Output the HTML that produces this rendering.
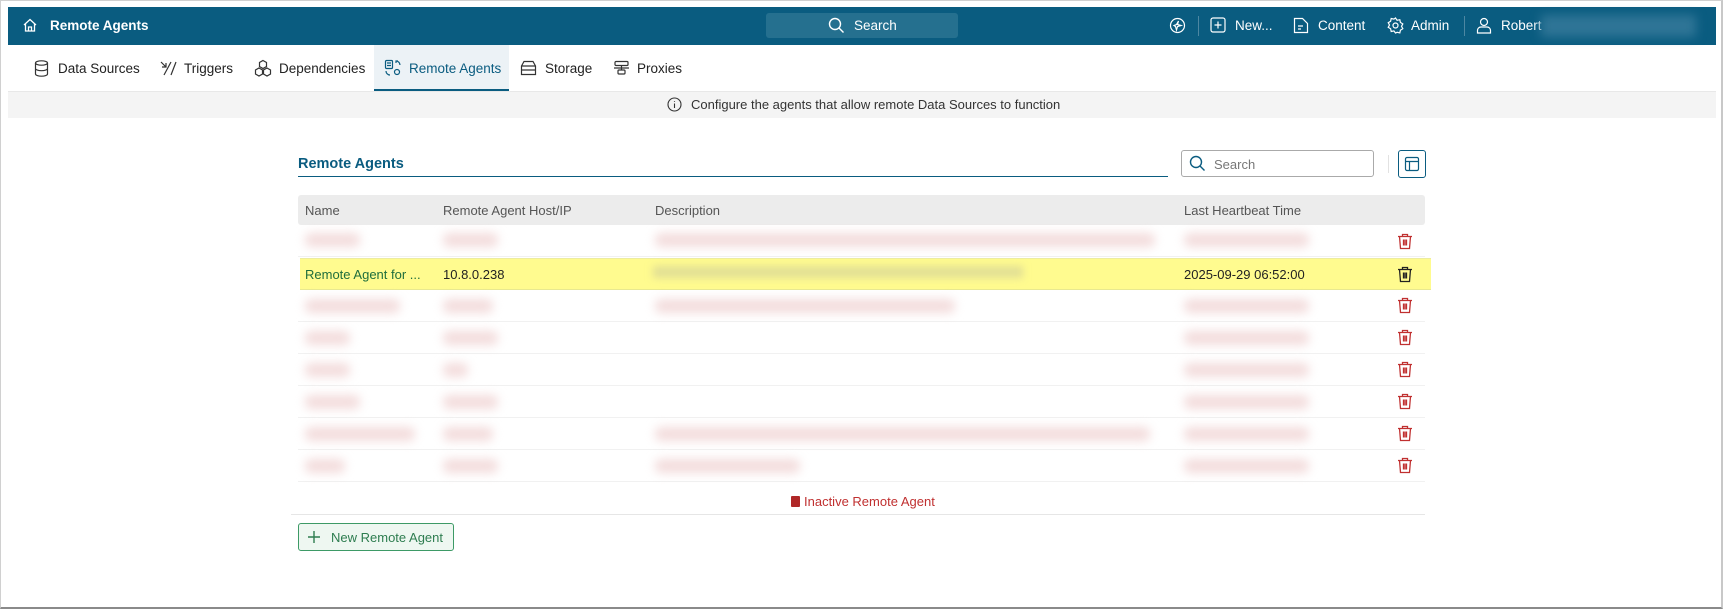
<!DOCTYPE html>
<html><head><meta charset="utf-8"><style>
*{box-sizing:border-box;margin:0;padding:0}
body{width:1723px;height:609px;background:#fff;font-family:"Liberation Sans",sans-serif;position:relative;overflow:hidden;color:#333}
.frame{position:absolute;left:0;top:0;width:1723px;height:609px;border:1px solid #d0d0d0;border-bottom:2px solid #8a8a8a;border-right:2px solid #c8c8c8}
.hdr{position:absolute;left:8px;top:7px;width:1708px;height:38px;background:#0a5c80;color:#fff;font-size:13.5px}
.hdr .t{position:absolute;top:11px}
.abs{position:absolute}
.tab{position:absolute;top:61px;font-size:13.5px;color:#222}
.blur{position:absolute;height:14px;margin-top:-3px;background:#f3dcdc;filter:blur(5px);border-radius:6px}
.row{position:absolute;left:298px;width:1127px;height:32px;border-bottom:1px solid #f1f1f1}
.trash{position:absolute;left:1397px}
</style></head><body>
<div class="frame"></div>
<div class="hdr">
 <svg class="abs" style="left:14px;top:10px" width="16" height="16" viewBox="0 0 16 16" fill="none" stroke="#fff" stroke-width="1.3"><path d="M2 8L8 2.5 14 8M3.5 6.8V14h9V6.8M6.5 14V10h3v4"/></svg>
 <span class="t" style="left:42px;font-weight:bold">Remote Agents</span>
 <div class="abs" style="left:758px;top:6px;width:192px;height:25px;background:#25708f;border-radius:3px"></div>
 <svg class="abs" style="left:820px;top:10px" width="17" height="17" viewBox="0 0 17 17" fill="none" stroke="#fff" stroke-width="1.4"><circle cx="7" cy="7" r="5.5"/><path d="M11 11l4.5 4.5"/></svg>
 <span class="t" style="left:846px">Search</span>
 <svg class="abs" style="left:1161px;top:10px" width="17" height="17" viewBox="0 0 17 17" fill="none" stroke="#fff" stroke-width="1.2"><circle cx="8.5" cy="8.5" r="7"/><path d="M9.5 4l-1 3.5L12 8.5l-3.5 1-1 3.5-1-3.5L5 8.5l2.5-1z"/></svg>
 <div class="abs" style="left:1190px;top:9px;width:1px;height:20px;background:#4d87a2"></div>
 <svg class="abs" style="left:1202px;top:10px" width="16" height="16" viewBox="0 0 16 16" fill="none" stroke="#fff" stroke-width="1.2"><rect x="1" y="1" width="14" height="14" rx="2"/><path d="M8 4.5v7M4.5 8h7"/></svg>
 <span class="t" style="left:1227px">New...</span>
 <svg class="abs" style="left:1285px;top:10px" width="16" height="17" viewBox="0 0 16 17" fill="none" stroke="#fff" stroke-width="1.2"><path d="M1.5 1.5h8l5 5v9h-13zM5 9h5M5 12h3"/></svg>
 <span class="t" style="left:1310px">Content</span>
 <svg class="abs" style="left:1379px;top:10px" width="17" height="17" viewBox="0 0 17 17" fill="none" stroke="#fff" stroke-width="1.2"><circle cx="8.5" cy="8.5" r="2.5"/><path d="M8.5 1l1.6 2.3 2.7-.6.6 2.7 2.4 1.5-1.3 2.4 1.3 2.4-2.4 1.5-.6 2.7-2.7-.6L8.5 16 6.9 13.9l-2.7.6-.6-2.7L1.2 10.3 2.5 8 1.2 5.7 3.6 4.2l.6-2.7 2.7.6z"/></svg>
 <span class="t" style="left:1403px">Admin</span>
 <div class="abs" style="left:1456px;top:9px;width:1px;height:20px;background:#4d87a2"></div>
 <svg class="abs" style="left:1468px;top:10px" width="16" height="17" viewBox="0 0 16 17" fill="none" stroke="#fff" stroke-width="1.2"><circle cx="8" cy="5" r="3.5"/><path d="M1.5 16v-2.5c0-2 1.5-3.5 3.5-3.5h6c2 0 3.5 1.5 3.5 3.5V16z"/></svg>
 <span class="t" style="left:1493px">Robert</span>
 <div class="abs" style="left:1533px;top:8px;width:155px;height:22px;background:#2f7596;filter:blur(5px)"></div>
</div>
<!-- tabs -->
<div class="abs" style="left:374px;top:45px;width:135px;height:46px;background:#ecf2f6;border-bottom:2px solid #0a5c80"></div>
<svg class="abs" style="left:34px;top:60px" width="15" height="17" viewBox="0 0 15 17" fill="none" stroke="#333" stroke-width="1.2"><ellipse cx="7.5" cy="3" rx="6" ry="2.2"/><path d="M1.5 3v11c0 1.2 2.7 2.2 6 2.2s6-1 6-2.2V3M1.5 8.5c0 1.2 2.7 2.2 6 2.2s6-1 6-2.2"/></svg>
<span class="tab" style="left:58px">Data Sources</span>
<svg class="abs" style="left:159px;top:60px" width="18" height="17" viewBox="0 0 18 17" fill="none" stroke="#333" stroke-width="1.2"><path d="M2 2l5 5M7 3v4H3M5 15L12 2M12 15L17 2"/></svg>
<span class="tab" style="left:184px">Triggers</span>
<svg class="abs" style="left:254px;top:59px" width="18" height="18" viewBox="0 0 18 18" fill="none" stroke="#333" stroke-width="1.2"><path d="M9 1.5l3.5 2v4L9 9.5l-3.5-2v-4zM5 9l3.5 2v4L5 17l-3.5-2v-4zM13 9l3.5 2v4L13 17l-3.5-2v-4z"/></svg>
<span class="tab" style="left:279px">Dependencies</span>
<svg class="abs" style="left:384px;top:59px" width="18" height="18" viewBox="0 0 18 18" fill="none" stroke="#0a5c80" stroke-width="1.2"><rect x="1.5" y="1.5" width="7" height="8" rx="1"/><path d="M3 4h4M3 6.5h4M12 2a4 4 0 0 1 4 4M14 2h-2v2M6 16a4 4 0 0 1-4-4"/><circle cx="13" cy="13" r="2.5"/></svg>
<span class="tab" style="left:409px;color:#0a5c80">Remote Agents</span>
<svg class="abs" style="left:520px;top:60px" width="17" height="16" viewBox="0 0 17 16" fill="none" stroke="#333" stroke-width="1.2"><path d="M1.5 6L4 1.5h9L15.5 6v8.5h-14zM1.5 6h14M1.5 10h14"/></svg>
<span class="tab" style="left:545px">Storage</span>
<svg class="abs" style="left:613px;top:60px" width="17" height="16" viewBox="0 0 17 16" fill="none" stroke="#333" stroke-width="1.2"><rect x="2" y="1.5" width="13" height="4" rx="1"/><rect x="5" y="10" width="7" height="4" rx="1"/><path d="M8.5 5.5V10M1 8h15"/></svg>
<span class="tab" style="left:637px">Proxies</span>
<!-- info bar -->
<div class="abs" style="left:8px;top:91px;width:1708px;height:27px;background:#f4f4f4;border-top:1px solid #e8e8e8"></div>
<svg class="abs" style="left:667px;top:97px" width="15" height="15" viewBox="0 0 15 15" fill="none" stroke="#333" stroke-width="1.1"><circle cx="7.5" cy="7.5" r="6.5"/><path d="M7.5 6.5v4.5M7.5 4v.8"/></svg>
<span class="abs" style="left:691px;top:97px;font-size:13px;color:#333">Configure the agents that allow remote Data Sources to function</span>
<!-- title -->
<span class="abs" style="left:298px;top:156px;font-size:14.5px;font-weight:bold;color:#0a5c80">Remote Agents</span>
<div class="abs" style="left:298px;top:176px;width:870px;height:1px;background:#0a5c80"></div>
<div class="abs" style="left:1181px;top:150px;width:193px;height:27px;border:1px solid #aaa;border-radius:3px"></div>
<svg class="abs" style="left:1189px;top:155px" width="17" height="17" viewBox="0 0 17 17" fill="none" stroke="#0a5c80" stroke-width="1.4"><circle cx="7" cy="7" r="5.5"/><path d="M11 11l4.5 4.5"/></svg>
<span class="abs" style="left:1214px;top:157px;font-size:13px;color:#777">Search</span>
<div class="abs" style="left:1388px;top:155px;width:1px;height:18px;background:#e2e2e2"></div>
<div class="abs" style="left:1398px;top:150px;width:28px;height:28px;border:1.3px solid #0a5c80;border-radius:3px"></div>
<svg class="abs" style="left:1404px;top:156px" width="16" height="16" viewBox="0 0 16 16" fill="none" stroke="#0a5c80" stroke-width="1.2"><rect x="1.5" y="1.5" width="13" height="13" rx="1.5"/><path d="M1.5 5.5h13M5.5 5.5v9"/></svg>
<!-- table header -->
<div class="abs" style="left:298px;top:195px;width:1127px;height:30px;background:#ececec;border-radius:3px"></div>
<span class="abs" style="left:305px;top:203px;font-size:13px;color:#555">Name</span>
<span class="abs" style="left:443px;top:203px;font-size:13px;color:#555">Remote Agent Host/IP</span>
<span class="abs" style="left:655px;top:203px;font-size:13px;color:#555">Description</span>
<span class="abs" style="left:1184px;top:203px;font-size:13px;color:#555">Last Heartbeat Time</span>

<!-- rows -->
<div class="row" style="top:225px"></div>
<div class="blur" style="left:305px;top:236px;width:55px"></div><div class="blur" style="left:443px;top:236px;width:55px"></div><div class="blur" style="left:655px;top:236px;width:500px"></div><div class="blur" style="left:1184px;top:236px;width:125px"></div>
<div class="abs" style="left:300px;top:258px;width:1131px;height:32px;background:#fffb8f;border-top:1px solid #ececa0;border-bottom:1px solid #e8e890"></div>
<span class="abs" style="left:305px;top:267px;font-size:13px;color:#1f6e3c">Remote Agent for ...</span>
<span class="abs" style="left:443px;top:267px;font-size:13px;color:#222">10.8.0.238</span>
<div class="abs" style="left:653px;top:266px;width:370px;height:12px;background:#e2df95;filter:blur(4px)"></div>
<span class="abs" style="left:1184px;top:267px;font-size:13px;color:#222">2025-09-29 06:52:00</span>

<div class="row" style="top:290px"></div>
<div class="blur" style="left:305px;top:302px;width:95px"></div><div class="blur" style="left:443px;top:302px;width:50px"></div><div class="blur" style="left:655px;top:302px;width:300px"></div><div class="blur" style="left:1184px;top:302px;width:125px"></div>
<div class="row" style="top:322px"></div>
<div class="blur" style="left:305px;top:334px;width:45px"></div><div class="blur" style="left:443px;top:334px;width:55px"></div><div class="blur" style="left:1184px;top:334px;width:125px"></div>
<div class="row" style="top:354px"></div>
<div class="blur" style="left:305px;top:366px;width:45px"></div><div class="blur" style="left:443px;top:366px;width:25px"></div><div class="blur" style="left:1184px;top:366px;width:125px"></div>
<div class="row" style="top:386px"></div>
<div class="blur" style="left:305px;top:398px;width:55px"></div><div class="blur" style="left:443px;top:398px;width:55px"></div><div class="blur" style="left:1184px;top:398px;width:125px"></div>
<div class="row" style="top:418px"></div>
<div class="blur" style="left:305px;top:430px;width:110px"></div><div class="blur" style="left:443px;top:430px;width:50px"></div><div class="blur" style="left:655px;top:430px;width:495px"></div><div class="blur" style="left:1184px;top:430px;width:125px"></div>
<div class="row" style="top:450px"></div>
<div class="blur" style="left:305px;top:462px;width:40px"></div><div class="blur" style="left:443px;top:462px;width:55px"></div><div class="blur" style="left:655px;top:462px;width:145px"></div><div class="blur" style="left:1184px;top:462px;width:125px"></div>

<!-- trash icons -->
<svg width="0" height="0" style="position:absolute"><defs><g id="tr"><path d="M1 3.5h14M5.5 3.5V1.5h5v2M2.5 3.5l1 12h9l1-12M6.5 6.5v6M8 6.5v6M9.5 6.5v6" fill="none" stroke-width="1.3"/></g></defs></svg>
<svg class="trash" style="top:233px" width="16" height="17" viewBox="0 0 16 17" stroke="#c03030"><use href="#tr"/></svg>
<svg class="trash" style="top:266px" width="16" height="17" viewBox="0 0 16 17" stroke="#222"><use href="#tr"/></svg>
<svg class="trash" style="top:297px" width="16" height="17" viewBox="0 0 16 17" stroke="#c03030"><use href="#tr"/></svg>
<svg class="trash" style="top:329px" width="16" height="17" viewBox="0 0 16 17" stroke="#c03030"><use href="#tr"/></svg>
<svg class="trash" style="top:361px" width="16" height="17" viewBox="0 0 16 17" stroke="#c03030"><use href="#tr"/></svg>
<svg class="trash" style="top:393px" width="16" height="17" viewBox="0 0 16 17" stroke="#c03030"><use href="#tr"/></svg>
<svg class="trash" style="top:425px" width="16" height="17" viewBox="0 0 16 17" stroke="#c03030"><use href="#tr"/></svg>
<svg class="trash" style="top:457px" width="16" height="17" viewBox="0 0 16 17" stroke="#c03030"><use href="#tr"/></svg>

<!-- legend -->
<div class="abs" style="left:791px;top:496px;width:9px;height:11px;background:#b02828;border-radius:1px"></div>
<span class="abs" style="left:804px;top:494px;font-size:13px;color:#c03030">Inactive Remote Agent</span>
<div class="abs" style="left:291px;top:514px;width:1134px;height:1px;background:#e6e6e6"></div>
<!-- button -->
<div class="abs" style="left:298px;top:523px;width:156px;height:28px;border:1.3px solid #3d9a66;border-radius:3px;background:#eef7f1"></div>
<svg class="abs" style="left:307px;top:530px" width="14" height="14" viewBox="0 0 14 14" stroke="#2e7d50" stroke-width="1.4"><path d="M7 1v12M1 7h12"/></svg>
<span class="abs" style="left:331px;top:530px;font-size:13px;color:#2e7d50">New Remote Agent</span>
</body></html>
